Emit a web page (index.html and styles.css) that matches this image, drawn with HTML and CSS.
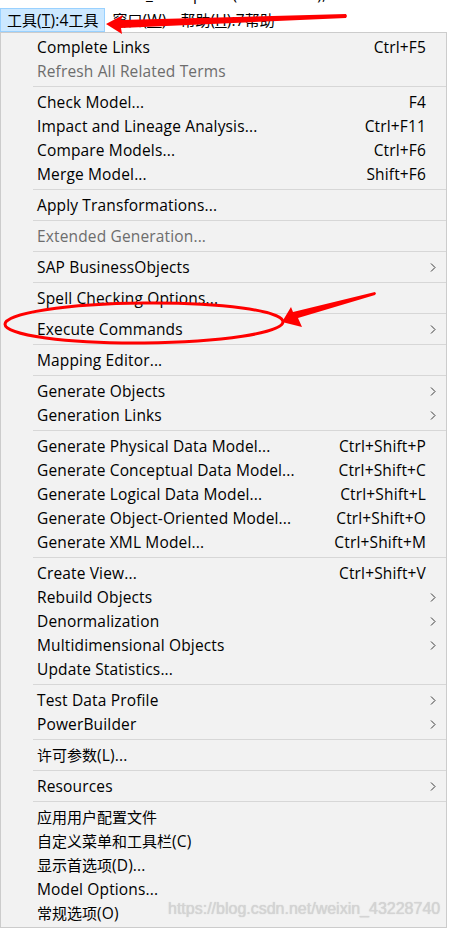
FILE: index.html
```html
<!DOCTYPE html>
<html lang="zh-CN">
<head>
<meta charset="utf-8">
<title>工具菜单</title>
<link rel="stylesheet" href="styles.css">
</head>
<body>
<div class="prev"><div class="prev-line"><span class="p1">_</span><span class="p2">p</span><span class="p3">(</span><span class="p4">),</span></div></div>
<div class="menubar">
  <span class="mb active"><span class="zh">工具</span>(<u>T</u>):4<span class="zh">工具</span></span>
  <span class="mb"><span class="zh">窗口</span>(<u>W</u>)</span>
  <span class="mb"><span class="zh">帮助</span>(<u>H</u>):7<span class="zh">帮助</span></span>
</div>
<div class="menu">
  <div class="mi"><span class="t">Complete Links</span><span class="k">Ctrl+F5</span><span class="s"></span></div>
  <div class="mi dis"><span class="t">Refresh All Related Terms</span><span class="k"></span><span class="s"></span></div>
  <div class="sep"></div>
  <div class="mi"><span class="t">Check Model...</span><span class="k">F4</span><span class="s"></span></div>
  <div class="mi"><span class="t">Impact and Lineage Analysis...</span><span class="k">Ctrl+F11</span><span class="s"></span></div>
  <div class="mi"><span class="t">Compare Models...</span><span class="k">Ctrl+F6</span><span class="s"></span></div>
  <div class="mi"><span class="t">Merge Model...</span><span class="k">Shift+F6</span><span class="s"></span></div>
  <div class="sep"></div>
  <div class="mi"><span class="t">Apply Transformations...</span><span class="k"></span><span class="s"></span></div>
  <div class="sep"></div>
  <div class="mi dis"><span class="t">Extended Generation...</span><span class="k"></span><span class="s"></span></div>
  <div class="sep"></div>
  <div class="mi"><span class="t">SAP BusinessObjects</span><span class="k"></span><span class="s"><svg class="chev" width="6" height="9" viewBox="0 0 6 9"><path d="M1 .5 5 4.5 1 8.5"/></svg></span></div>
  <div class="sep"></div>
  <div class="mi"><span class="t">Spell Checking Options...</span><span class="k"></span><span class="s"></span></div>
  <div class="sep"></div>
  <div class="mi"><span class="t">Execute Commands</span><span class="k"></span><span class="s"><svg class="chev" width="6" height="9" viewBox="0 0 6 9"><path d="M1 .5 5 4.5 1 8.5"/></svg></span></div>
  <div class="sep"></div>
  <div class="mi"><span class="t">Mapping Editor...</span><span class="k"></span><span class="s"></span></div>
  <div class="sep"></div>
  <div class="mi"><span class="t">Generate Objects</span><span class="k"></span><span class="s"><svg class="chev" width="6" height="9" viewBox="0 0 6 9"><path d="M1 .5 5 4.5 1 8.5"/></svg></span></div>
  <div class="mi"><span class="t">Generation Links</span><span class="k"></span><span class="s"><svg class="chev" width="6" height="9" viewBox="0 0 6 9"><path d="M1 .5 5 4.5 1 8.5"/></svg></span></div>
  <div class="sep"></div>
  <div class="mi"><span class="t">Generate Physical Data Model...</span><span class="k">Ctrl+Shift+P</span><span class="s"></span></div>
  <div class="mi"><span class="t">Generate Conceptual Data Model...</span><span class="k">Ctrl+Shift+C</span><span class="s"></span></div>
  <div class="mi"><span class="t">Generate Logical Data Model...</span><span class="k">Ctrl+Shift+L</span><span class="s"></span></div>
  <div class="mi"><span class="t">Generate Object-Oriented Model...</span><span class="k">Ctrl+Shift+O</span><span class="s"></span></div>
  <div class="mi"><span class="t">Generate XML Model...</span><span class="k">Ctrl+Shift+M</span><span class="s"></span></div>
  <div class="sep"></div>
  <div class="mi"><span class="t">Create View...</span><span class="k">Ctrl+Shift+V</span><span class="s"></span></div>
  <div class="mi"><span class="t">Rebuild Objects</span><span class="k"></span><span class="s"><svg class="chev" width="6" height="9" viewBox="0 0 6 9"><path d="M1 .5 5 4.5 1 8.5"/></svg></span></div>
  <div class="mi"><span class="t">Denormalization</span><span class="k"></span><span class="s"><svg class="chev" width="6" height="9" viewBox="0 0 6 9"><path d="M1 .5 5 4.5 1 8.5"/></svg></span></div>
  <div class="mi"><span class="t">Multidimensional Objects</span><span class="k"></span><span class="s"><svg class="chev" width="6" height="9" viewBox="0 0 6 9"><path d="M1 .5 5 4.5 1 8.5"/></svg></span></div>
  <div class="mi"><span class="t">Update Statistics...</span><span class="k"></span><span class="s"></span></div>
  <div class="sep"></div>
  <div class="mi"><span class="t">Test Data Profile</span><span class="k"></span><span class="s"><svg class="chev" width="6" height="9" viewBox="0 0 6 9"><path d="M1 .5 5 4.5 1 8.5"/></svg></span></div>
  <div class="mi"><span class="t">PowerBuilder</span><span class="k"></span><span class="s"><svg class="chev" width="6" height="9" viewBox="0 0 6 9"><path d="M1 .5 5 4.5 1 8.5"/></svg></span></div>
  <div class="sep"></div>
  <div class="mi"><span class="t"><span class="zh">许可参数</span>(L)...</span><span class="k"></span><span class="s"></span></div>
  <div class="sep"></div>
  <div class="mi"><span class="t">Resources</span><span class="k"></span><span class="s"><svg class="chev" width="6" height="9" viewBox="0 0 6 9"><path d="M1 .5 5 4.5 1 8.5"/></svg></span></div>
  <div class="sep"></div>
  <div class="mi"><span class="t"><span class="zh">应用用户配置文件</span></span><span class="k"></span><span class="s"></span></div>
  <div class="mi"><span class="t"><span class="zh">自定义菜单和工具栏</span>(C)</span><span class="k"></span><span class="s"></span></div>
  <div class="mi"><span class="t"><span class="zh">显示首选项</span>(D)...</span><span class="k"></span><span class="s"></span></div>
  <div class="mi"><span class="t">Model Options...</span><span class="k"></span><span class="s"></span></div>
  <div class="mi"><span class="t"><span class="zh">常规选项</span>(O)</span><span class="k"></span><span class="s"></span></div>
</div>
<div class="watermark">https://blog.csdn.net/weixin_43228740</div>
<svg class="annot" width="449" height="928" viewBox="0 0 449 928">
  <polygon points="106,24 123,15 121,20 346,14 347,16 346,18 121,28 122,34" fill="#ff0000"/>
  <ellipse cx="144" cy="323" rx="139" ry="20" fill="none" stroke="#ff0000" stroke-width="3" transform="rotate(-0.5 144 323)"/>
  <polygon points="282,322 291,307 293,312 375,292 376,293.5 375,295 298,318 302,327" fill="#ff0000"/>
</svg>
</body>
</html>
```
FILE: styles.css
```css
* { box-sizing: border-box; }
html, body { margin: 0; padding: 0; background: #ffffff; }
body {
  width: 449px;
  height: 928px;
  overflow: hidden;
  position: relative;
  font-family: "Open Sans", "Noto Sans CJK SC", sans-serif;
  font-size: 15.5px;
  letter-spacing: 0.15px;
  color: #000000;
}
.zh {
  font-family: "Noto Sans CJK SC", sans-serif;
  font-size: 15px;
  letter-spacing: 0;
}
.prev { height: 8px; overflow: hidden; }
.prev-line {
  height: 20px;
  line-height: 20px;
  margin-top: -16px;
  white-space: pre;
  display: flex;
}
.p1 { margin-left: 146px; }
.p2 { margin-left: 40px; }
.p3 { margin-left: 30px; }
.p4 { margin-left: 80px; }
.menubar { display: flex; height: 24px; }
.mb {
  height: 24px;
  line-height: 22px;
  padding: 0 6px;
  border: 1px solid transparent;
  white-space: nowrap;
}
.mb.active { background: #cce8ff; border-color: #99d1ff; }
.menu {
  width: 447px;
  border: 1px solid #cccccc;
  background: #f2f2f2;
  padding: 2px 0;
}
.mi {
  display: flex;
  align-items: center;
  height: 24px;
  line-height: 24px;
  padding-left: 36px;
  white-space: nowrap;
}
.mi.dis { color: #6d6d6d; }
.t { flex: 1; }
.s {
  width: 20px;
  height: 24px;
  display: flex;
  align-items: center;
  padding-left: 4px;
}
.chev { display: block; margin-top: 1px; }
.chev path { fill: none; stroke: #3a3a3a; stroke-width: 1; }
.sep { height: 1px; margin: 3px 0 3px 32px; background: #d7d7d7; }
.watermark {
  position: absolute;
  left: 168px;
  top: 900px;
  font-family: "Liberation Sans", Arial, sans-serif;
  font-size: 16px;
  letter-spacing: 0;
  line-height: 18px;
  color: #d4d4d4;
  text-shadow: 0 0 1px rgba(120,120,120,0.35);
  white-space: nowrap;
}
.annot { position: absolute; left: 0; top: 0; pointer-events: none; }
```
